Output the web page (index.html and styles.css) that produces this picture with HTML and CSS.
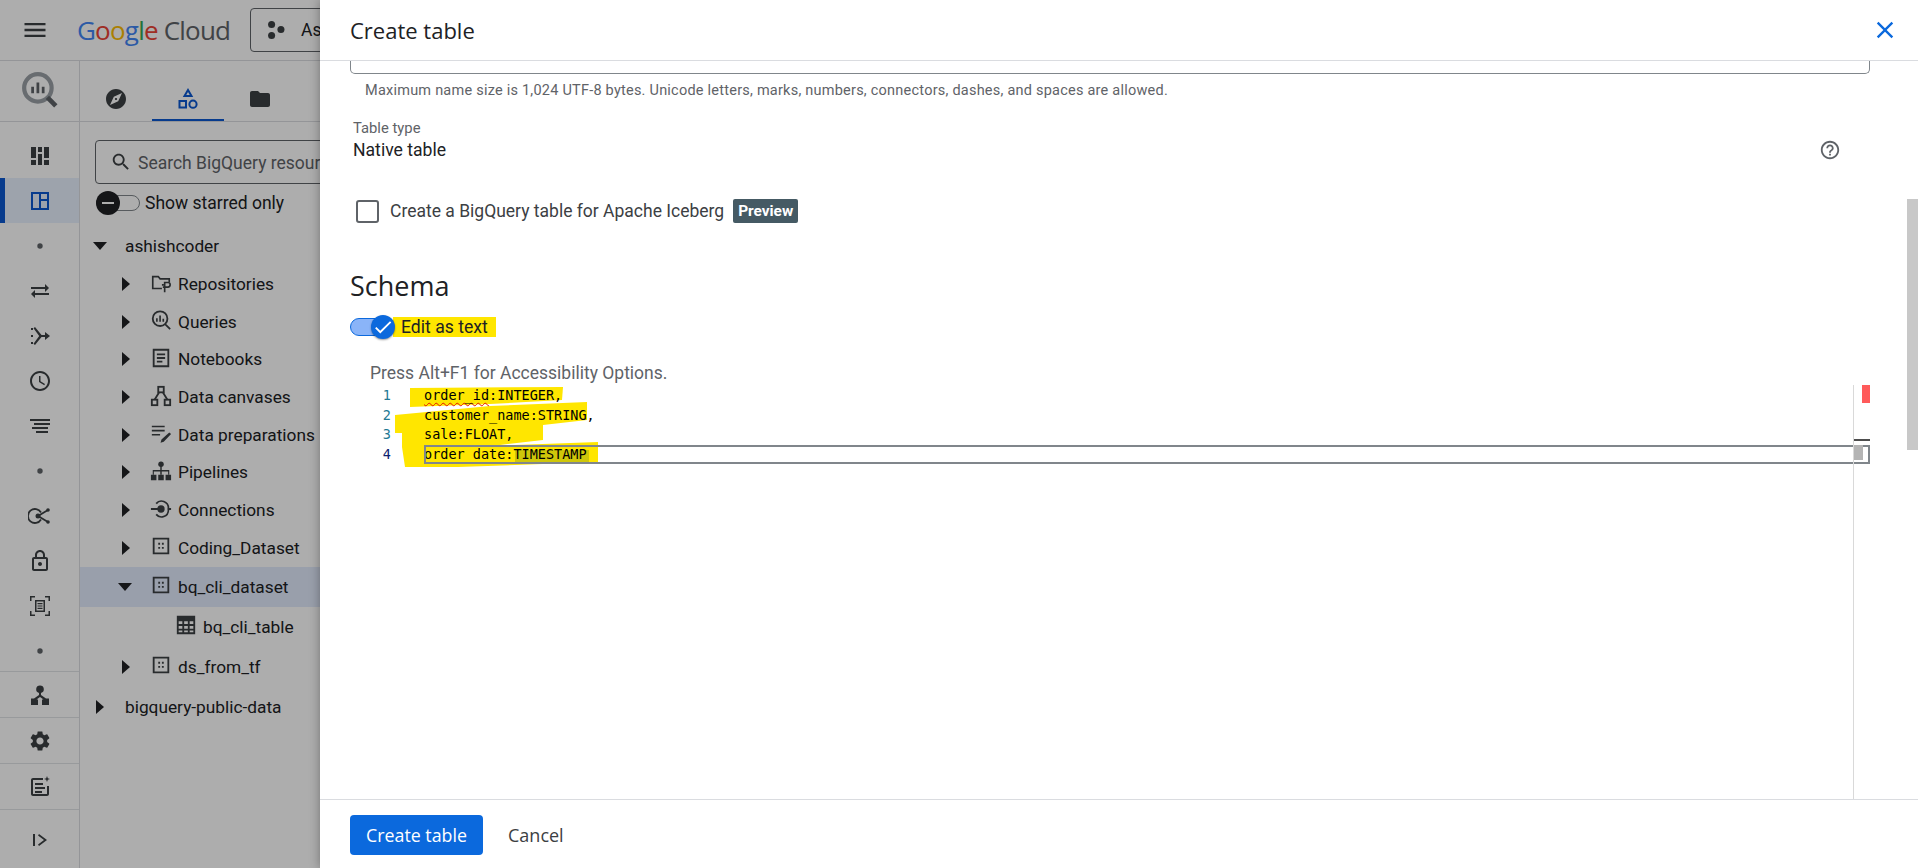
FILE: index.html
```html
<!DOCTYPE html>
<html lang="en">
<head>
<meta charset="utf-8">
<title>Create table</title>
<link rel="stylesheet" href="styles.css">
</head>
<body>
<svg class="defs" width="0" height="0" aria-hidden="true">
  <symbol id="i-arrow-r" viewBox="0 0 16 16"><path d="M4 1l8 7-8 7z"/></symbol>
  <symbol id="i-arrow-d" viewBox="0 0 16 16"><path d="M1 4h14l-7 8z"/></symbol>
  <symbol id="i-dataset" viewBox="0 0 24 24"><path fill-rule="evenodd" d="M3 3h18v18H3zM5 5v14h14V5zM9 8.500h2v2H9zM13 8.500h2v2h-2zM9 13h2v2H9zM13 13h2v2h-2z"/></symbol>
  <symbol id="i-dot" viewBox="0 0 24 24"><circle cx="12" cy="12" r="2.700"/></symbol>
</svg>

<div class="app">
  <header class="topbar">
    <button class="menu"><svg class="ic24" viewBox="0 0 24 24"><path d="M3 18h18v-2H3v2zm0-5h18v-2H3v2zm0-7v2h18V6H3z"/></svg></button>
    <div class="logo"><span class="g-b">G</span><span class="g-r">o</span><span class="g-y">o</span><span class="g-b">g</span><span class="g-g">l</span><span class="g-r">e</span><span class="logo-cloud">Cloud</span></div>
    <div class="project">
      <svg class="ic20" viewBox="0 0 20 20"><circle cx="6" cy="5" r="3.200"/><circle cx="14.500" cy="9.500" r="3.200"/><circle cx="6" cy="15" r="3.200"/></svg>
      <span>As</span>
    </div>
  </header>
  <div class="main">
    <nav class="rail">
      <div class="rail-logo">
        <svg class="bq" viewBox="0 0 36 36"><circle cx="16" cy="16" r="13" fill="none" stroke="#9aa0a6" stroke-width="4"/><path d="M25 25l8 8" stroke="#5f6368" stroke-width="4.500" fill="none"/><path d="M11 15v6M16 11v10M21 15v6" stroke="#5f6368" stroke-width="2.600" fill="none"/></svg>
      </div>
      <div class="rail-group">
        <a class="rail-item"><svg class="ic22" viewBox="0 0 24 24"><path d="M3 3h5v11H3zM3 16h5v5H3zM10 3h4v5h-4zM10 10h4v11h-4zM16 3h5v11h-5zM16 16h5v5h-5z"/></svg></a>
        <a class="rail-item active"><svg class="ic22" viewBox="0 0 24 24"><path fill-rule="evenodd" d="M3 3h18v18H3zM5 5v14h6V5zM13 5v5h6V5zM13 12v7h6v-7z"/></svg></a>
        <a class="rail-item"><svg class="ic22 small" viewBox="0 0 24 24"><use href="#i-dot"/></svg></a>
        <a class="rail-item"><svg class="ic22" viewBox="0 0 24 24"><path d="M6.990 11L3 15l3.990 4v-3H21v-2H6.990v-3zM21 9l-4-4v3H3v2h14v3l4-4z"/></svg></a>
        <a class="rail-item"><svg class="ic22" viewBox="0 0 24 24"><path d="M3 4h2v2H3zM3 11h2v2H3zM3 18h2v2H3zM7 3l6.500 8H17V8l5 4-5 4v-3h-3.500L7 21l-1.500-1.200 5.700-7.800-5.700-7.800z"/></svg></a>
        <a class="rail-item"><svg class="ic22" viewBox="0 0 24 24"><path d="M11.990 2C6.470 2 2 6.480 2 12s4.470 10 9.990 10C17.520 22 22 17.520 22 12S17.520 2 11.990 2zM12 20c-4.420 0-8-3.580-8-8s3.580-8 8-8 8 3.580 8 8-3.580 8-8 8zm.5-13H11v6l5.250 3.150.75-1.230-4.500-2.670z"/></svg></a>
        <a class="rail-item"><svg class="ic22" viewBox="0 0 24 24"><path d="M2 5h20v2H2zM6 9h16v2H6zM4 13h16v2H4zM8 17h12v2H8z"/></svg></a>
        <a class="rail-item"><svg class="ic22 small" viewBox="0 0 24 24"><use href="#i-dot"/></svg></a>
        <a class="rail-item"><svg class="ic22" viewBox="0 0 24 24"><path fill="none" stroke="currentColor" stroke-width="1.800" d="M13 8.500A7 7 0 1 0 13 15.500M10 12l10-6M10 12l10 6"/><circle cx="10" cy="12" r="2.500"/><circle cx="20" cy="6" r="1.800"/><circle cx="20" cy="18" r="1.800"/></svg></a>
        <a class="rail-item"><svg class="ic22" viewBox="0 0 24 24"><path d="M18 8h-1V6c0-2.760-2.240-5-5-5S7 3.240 7 6v2H6c-1.100 0-2 .9-2 2v10c0 1.100.9 2 2 2h12c1.100 0 2-.9 2-2V10c0-1.100-.9-2-2-2zM9 6c0-1.660 1.340-3 3-3s3 1.340 3 3v2H9V6zm9 14H6V10h12v10zm-6-3c1.100 0 2-.9 2-2s-.9-2-2-2-2 .9-2 2 .9 2 2 2z"/></svg></a>
        <a class="rail-item"><svg class="ic22" viewBox="0 0 24 24"><path d="M2 2h5v1.500H3.500V7H2zM17 2h5v5h-1.500V3.500H17zM2 17h1.500v3.500H7V22H2zM20.500 17H22v5h-5v-1.500h3.500zM7 6h10v12H7zM8.500 7.500v9h7v-9zM9.500 9h5v1.200h-5zM9.500 11.400h5v1.200h-5zM9.500 13.800h5V15h-5z" fill-rule="evenodd"/></svg></a>
        <a class="rail-item"><svg class="ic22 small" viewBox="0 0 24 24"><use href="#i-dot"/></svg></a>
      </div>
      <div class="rail-sec"><svg class="ic22" viewBox="0 0 24 24"><path d="M12 2.500a3.800 3.800 0 0 1 1 7.470V12l5 3.500H21V22h-7v-5.500h1.500L12 14l-3.500 2.500H10V22H3v-6.500h3l5-3.500V9.970A3.800 3.800 0 0 1 12 2.500z"/></svg></div>
      <div class="rail-sec"><svg class="ic22" viewBox="0 0 24 24"><path d="M19.140 12.940c.04-.3.06-.61.06-.94 0-.32-.02-.64-.07-.94l2.030-1.580c.18-.14.23-.41.120-.61l-1.920-3.320c-.12-.22-.37-.29-.59-.22l-2.390.96c-.5-.38-1.030-.7-1.620-.94l-.36-2.540c-.04-.24-.24-.41-.48-.41h-3.840c-.24 0-.43.17-.47.41l-.36 2.540c-.59.24-1.130.57-1.620.94l-2.390-.96c-.22-.08-.47 0-.59.22L2.740 8.870c-.12.21-.08.47.12.61l2.030 1.580c-.05.3-.09.63-.09.94s.02.64.07.94l-2.030 1.580c-.18.14-.23.41-.12.61l1.920 3.320c.12.22.37.29.59.22l2.390-.96c.5.38 1.030.7 1.620.94l.36 2.540c.05.24.24.41.48.41h3.840c.24 0 .44-.17.47-.41l.36-2.540c.59-.24 1.130-.56 1.620-.94l2.390.96c.22.08.47 0 .59-.22l1.920-3.320c.12-.22.07-.47-.12-.61l-2.010-1.580zM12 15.600c-1.980 0-3.600-1.620-3.600-3.600s1.620-3.600 3.600-3.600 3.600 1.620 3.600 3.600-1.620 3.600-3.600 3.600z"/></svg></div>
      <div class="rail-sec"><svg class="ic22" viewBox="0 0 24 24"><path d="M15 3v2H5v14h14v-8h2v8c0 1.100-.9 2-2 2H5c-1.100 0-2-.9-2-2V5c0-1.100.9-2 2-2zM7 8h8v2H7zM7 12h10v2H7zM7 16h7v2H7zM19 1l.8 2.200L22 4l-2.200.8L19 7l-.8-2.200L16 4l2.200-.8z"/></svg></div>
      <div class="rail-foot"><svg class="ic22" viewBox="0 0 24 24"><path d="M5 6h2v12H5zM11 6l8 6-8 6-1-1.400 6-4.600-6-4.600z"/></svg></div>
    </nav>
    <section class="explorer">
      <div class="tabs">
        <a class="tab"><svg class="ic22" viewBox="0 0 24 24"><path d="M12 10.900c-.61 0-1.100.49-1.100 1.100s.49 1.100 1.100 1.100c.61 0 1.100-.49 1.100-1.100s-.49-1.100-1.100-1.100zM12 2C6.480 2 2 6.480 2 12s4.480 10 10 10 10-4.480 10-10S17.520 2 12 2zm2.190 12.190L6 18l3.810-8.190L18 6l-3.810 8.190z"/></svg></a>
        <a class="tab on"><svg class="ic22" viewBox="0 0 24 24" fill="none" stroke="currentColor" stroke-width="2"><path d="M12 3l3.500 6h-7z"/><rect x="3.500" y="14" width="6.500" height="6.500"/><circle cx="17" cy="17.200" r="3.600"/></svg></a>
        <a class="tab"><svg class="ic22" viewBox="0 0 24 24"><path d="M10 4H4c-1.100 0-1.990.9-1.990 2L2 18c0 1.100.9 2 2 2h16c1.100 0 2-.9 2-2V8c0-1.100-.9-2-2-2h-8l-2-2z"/></svg></a>
      </div>
      <div class="search">
        <svg class="ic20" viewBox="0 0 24 24"><path d="M15.500 14h-.79l-.28-.27C15.410 12.590 16 11.110 16 9.500 16 5.910 13.090 3 9.500 3S3 5.910 3 9.500 5.910 16 9.500 16c1.610 0 3.090-.59 4.230-1.570l.27.28v.79l5 4.990L20.490 19l-4.990-5zm-6 0C7.010 14 5 11.990 5 9.500S7.010 5 9.500 5 14 7.010 14 9.500 11.990 14 9.500 14z"/></svg>
        <span>Search BigQuery resources</span>
      </div>
      <div class="starred">
        <span class="sw"><span class="sw-thumb"></span></span>
        <span>Show starred only</span>
      </div>
      <ul class="tree">
        <li class="row l0"><svg class="arr" viewBox="0 0 16 16"><use href="#i-arrow-d"/></svg><span>ashishcoder</span></li>
        <li class="row l1"><svg class="arr" viewBox="0 0 16 16"><use href="#i-arrow-r"/></svg><svg class="ti" viewBox="0 0 24 24" fill="none" stroke="currentColor" stroke-width="1.800"><path d="M13 18H3V5h6l2 2.500h10V11"/><path d="M16 22V11.500h3.500a2.500 2.500 0 0 1 0 5H14M13 14h2"/></svg><span>Repositories</span></li>
        <li class="row l1"><svg class="arr" viewBox="0 0 16 16"><use href="#i-arrow-r"/></svg><svg class="ti" viewBox="0 0 24 24"><path fill="none" stroke="currentColor" stroke-width="2" d="M11 2.500a8 8 0 1 0 0 16 8 8 0 0 0 0-16zM17 17l5 5"/><path fill="none" stroke="currentColor" stroke-width="1.800" d="M7.500 10v4M11 7v7M14.500 10.500V14"/></svg><span>Queries</span></li>
        <li class="row l1"><svg class="arr" viewBox="0 0 16 16"><use href="#i-arrow-r"/></svg><svg class="ti" viewBox="0 0 24 24"><path fill-rule="evenodd" d="M3 2h18v20H3zM5 4v16h14V4zM7.500 7h9v2h-9zM7.500 11h9v2h-9zM7.500 15h6v2h-6z"/></svg><span>Notebooks</span></li>
        <li class="row l1"><svg class="arr" viewBox="0 0 16 16"><use href="#i-arrow-r"/></svg><svg class="ti" viewBox="0 0 24 24" fill="none" stroke="currentColor" stroke-width="2"><rect x="9" y="2" width="6" height="6"/><rect x="2" y="16" width="6" height="6"/><rect x="16" y="16" width="6" height="6"/><path d="M10 8l-5 8M14 8l5 8"/></svg><span>Data canvases</span></li>
        <li class="row l1"><svg class="arr" viewBox="0 0 16 16"><use href="#i-arrow-r"/></svg><svg class="ti" viewBox="0 0 24 24"><path d="M2 4h14v1.800H2zM2 8.500h14v1.800H2zM2 13h9v1.800H2zM21 11.500l2 1.500-8 8.500-3.500 1 1-3.500z"/></svg><span>Data preparations</span></li>
        <li class="row l1"><svg class="arr" viewBox="0 0 16 16"><use href="#i-arrow-r"/></svg><svg class="ti" viewBox="0 0 24 24"><circle cx="12" cy="4.500" r="3"/><path d="M11.200 6h1.600v5H21v5h-1.200v-3.400h-7V16h-1.600v-3.400h-7V16H3v-5h8.200z"/><path d="M1 16h6v6H1zM9 16h6v6H9zM17 16h6v6h-6z"/></svg><span>Pipelines</span></li>
        <li class="row l1"><svg class="arr" viewBox="0 0 16 16"><use href="#i-arrow-r"/></svg><svg class="ti" viewBox="0 0 24 24"><circle cx="12" cy="12" r="4"/><path d="M1 11h11v2H1zM6 5.500a8.500 8.500 0 0 1 15 5.500h2v2h-2a8.500 8.500 0 0 1-15 5.500l1.500-1.300a6.500 6.500 0 0 0 11.500-5.200 6.500 6.500 0 0 0-11.500-5.200z"/></svg><span>Connections</span></li>
        <li class="row l1"><svg class="arr" viewBox="0 0 16 16"><use href="#i-arrow-r"/></svg><svg class="ti" viewBox="0 0 24 24"><use href="#i-dataset"/></svg><span>Coding_Dataset</span></li>
        <li class="row l1 lg selected"><svg class="arr" viewBox="0 0 16 16"><use href="#i-arrow-d"/></svg><svg class="ti" viewBox="0 0 24 24"><use href="#i-dataset"/></svg><span>bq_cli_dataset</span></li>
        <li class="row l2 lg"><svg class="ti" viewBox="0 0 24 24"><path fill-rule="evenodd" d="M2 2h20v20H2zM4 8v3h4V8zM10 8v3h4V8zM16 8v3h4V8zM4 13v3h4v-3zM10 13v3h4v-3zM16 13v3h4v-3zM4 18v2h4v-2zM10 18v2h4v-2zM16 18v2h4v-2z"/></svg><span>bq_cli_table</span></li>
        <li class="row l1 lg"><svg class="arr" viewBox="0 0 16 16"><use href="#i-arrow-r"/></svg><svg class="ti" viewBox="0 0 24 24"><use href="#i-dataset"/></svg><span>ds_from_tf</span></li>
        <li class="row l0 lg"><svg class="arr" viewBox="0 0 16 16"><use href="#i-arrow-r"/></svg><span>bigquery-public-data</span></li>
      </ul>
    </section>
  </div>
</div>

<div class="scrim"></div>

<aside class="panel">
  <header class="panel-head">
    <h1>Create table</h1>
    <button class="close"><svg viewBox="0 0 24 24"><path d="M19 6.410L17.590 5 12 10.590 6.410 5 5 6.410 10.590 12 5 17.590 6.410 19 12 13.410 17.590 19 19 17.590 13.410 12z"/></svg></button>
  </header>
  <div class="panel-body">
    <div class="input-tail"></div>
    <p class="hint">Maximum name size is 1,024 UTF-8 bytes. Unicode letters, marks, numbers, connectors, dashes, and spaces are allowed.</p>
    <div class="type-label">Table type</div>
    <div class="type-row">
      <span>Native table</span>
      <svg class="help" viewBox="0 0 24 24"><path d="M11 18h2v-2h-2v2zm1-16C6.480 2 2 6.480 2 12s4.480 10 10 10 10-4.480 10-10S17.520 2 12 2zm0 18c-4.410 0-8-3.590-8-8s3.590-8 8-8 8 3.590 8 8-3.590 8-8 8zm0-14c-2.210 0-4 1.790-4 4h2c0-1.100.9-2 2-2s2 .9 2 2c0 2-3 1.750-3 5h2c0-2.250 3-2.500 3-5 0-2.210-1.790-4-4-4z"/></svg>
    </div>
    <div class="check-row">
      <span class="checkbox"></span>
      <span>Create a BigQuery table for Apache Iceberg</span>
      <span class="badge">Preview</span>
    </div>
    <h2>Schema</h2>
    <div class="toggle-row">
      <span class="toggle"><span class="toggle-thumb"><svg viewBox="0 0 24 24"><path d="M9 16.200L4.800 12l-1.400 1.400L9 19 21 7l-1.400-1.400z"/></svg></span></span>
      <span class="marked">Edit as text</span>
    </div>
    <p class="a11y">Press Alt+F1 for Accessibility Options.</p>
    <div class="editor">
      <svg class="marker" viewBox="0 0 1520 414" width="1520" height="414">
        <path d="M60 3 L213 2 L212 15 L140 19 L60 22 Z"/>
        <path d="M45 30 L140 21 L237 17 L237 35 L193 40 L193 55 L150 60 L165 60 L248 57 L248 77 L108 82 L55 82 L52 62 L52 48 L45 48 Z"/>
        <rect class="sel" x="165" y="65" width="74" height="12"/>
      </svg>
      <div class="line"><span class="num">1</span><span class="code"><span class="squig">order_id</span>:INTEGER,</span></div>
      <div class="line"><span class="num">2</span><span class="code">customer_name:STRING,</span></div>
      <div class="line"><span class="num">3</span><span class="code">sale:FLOAT,</span></div>
      <div class="line cur"><span class="num">4</span><span class="code">order_date:TIMESTAMP</span></div>
      <div class="ruler">
        <span class="r-err"></span>
        <span class="r-cur"></span>
        <span class="r-thumb"></span>
      </div>
    </div>
    <div class="scrollbar"></div>
  </div>
  <footer class="panel-foot">
    <button class="primary">Create table</button>
    <button class="ghost">Cancel</button>
  </footer>
</aside>
</body>
</html>
```

FILE: styles.css
```css
* { box-sizing: border-box; }
html, body { margin: 0; height: 100%; }
body {
  width: 1918px;
  height: 868px;
  overflow: hidden;
  position: relative;
  background: #fff;
  color: #202124;
  font-family: Roboto, "Liberation Sans", sans-serif;
  font-size: 17.5px;
}
button { font: inherit; background: none; border: 0; padding: 0; }
h1, h2, p, ul { margin: 0; padding: 0; font-weight: 400; }
ul { list-style: none; }
.defs { position: absolute; }
svg { display: block; flex: none; }
svg:not([fill]) { fill: currentColor; }
.ic24 { width: 28px; height: 28px; }
.ic22 { width: 24px; height: 24px; }
.ic20 { width: 22px; height: 22px; }

/* background app */
.app { display: flex; flex-direction: column; height: 868px; }
.topbar {
  height: 61px;
  flex: none;
  display: flex;
  align-items: center;
  border-bottom: 1px solid #dadce0;
  color: #3c4043;
}
.menu { margin-left: 21px; color: #3c4043; }
.logo {
  margin-left: 28px;
  font-family: "Open Sans", Roboto, sans-serif;
  font-size: 26px;
  letter-spacing: -0.8px;
  line-height: 30px;
  width: 145px;
  white-space: nowrap;
}
.g-b { color: #4285f4; } .g-r { color: #ea4335; } .g-y { color: #fbbc04; } .g-g { color: #34a853; }
.logo-cloud { color: #5f6368; margin-left: 6px; }
.project {
  margin-left: 28px;
  height: 44px;
  padding: 0 14px;
  width: 200px;
  display: flex;
  align-items: center;
  gap: 14px;
  border: 1px solid #5f6368;
  border-radius: 4px;
  color: #202124;
}
.project svg { color: #3c4043; }
.main { flex: 1; display: flex; min-height: 0; }
.rail {
  width: 80px;
  flex: none;
  display: flex;
  flex-direction: column;
  border-right: 1px solid #dadce0;
  color: #3c4043;
}
.rail-logo {
  height: 61px;
  flex: none;
  display: flex;
  align-items: center;
  justify-content: center;
  border-bottom: 1px solid #dadce0;
  padding-bottom: 3px;
}
.bq { width: 38px; height: 38px; }
.rail-group { padding-top: 11px; height: 549px; flex: none; }
.rail-item {
  height: 45px;
  display: flex;
  align-items: center;
  justify-content: center;
  color: #3c4043;
}
.rail-item .small { color: #5f6368; }
.rail-item.active {
  background: #e8f0fe;
  color: #0b57d0;
  box-shadow: inset 5px 0 0 #0b57d0;
}
.rail-sec {
  height: 46px;
  flex: none;
  display: flex;
  align-items: center;
  justify-content: center;
  border-top: 1px solid #e1e3e6;
}
.rail-foot {
  flex: 1;
  padding-top: 2px;
  display: flex;
  align-items: center;
  justify-content: center;
  border-top: 1px solid #e1e3e6;
}
.explorer {
  width: 240px;
  flex: none;
  overflow: hidden;
  display: flex;
  flex-direction: column;
}
.tabs {
  height: 61px;
  flex: none;
  display: flex;
  border-bottom: 1px solid #dadce0;
  color: #3c4043;
}
.tab {
  width: 72px;
  height: 60px;
  padding-top: 16px;
  display: flex;
  align-items: center;
  justify-content: center;
}
.tab.on { color: #0b57d0; box-shadow: inset 0 -2px 0 #0b57d0; }
.search {
  margin: 18px 0 0 15px;
  height: 44px;
  width: 400px;
  flex: none;
  display: flex;
  align-items: center;
  gap: 6px;
  padding-left: 14px;
  border: 1px solid #5f6368;
  border-radius: 4px;
  color: #5f6368;
  white-space: nowrap;
}
.search span { padding-top: 1px; }
.search svg { color: #3c4043; }
.starred {
  display: flex;
  align-items: center;
  margin: 7px 0 0 15px;
  height: 24px;
  gap: 5px;
  flex: none;
  color: #202124;
  white-space: nowrap;
}
.sw {
  width: 44px;
  height: 16px;
  flex: none;
  margin-left: 1px;
  position: relative;
  background: #fff;
  border: 1px solid #80868b;
  border-radius: 8px;
}
.sw-thumb {
  position: absolute;
  left: -1px;
  top: -5px;
  width: 24px;
  height: 24px;
  border-radius: 50%;
  background: #202124;
}
.sw-thumb::after {
  content: "";
  position: absolute;
  left: 6px;
  top: 11px;
  width: 12px;
  height: 2px;
  background: #fff;
}
.tree { margin-top: 12.500px; flex: 1; }
.row {
  height: 37.700px;
  display: flex;
  align-items: center;
  white-space: nowrap;
  color: #202124;
  font-size: 17.300px;
}
.row.lg { height: 40px; }
.row.selected { background: #e2eafc; }
.arr { width: 16px; height: 16px; color: #202124; }
.ti { width: 22px; height: 22px; margin: 0 6px 3px 16px; color: #3c4043; }
.l0 { padding-left: 12px; }
.l0 .arr { margin-right: 17px; }
.l1 { padding-left: 38px; }
.l2 { padding-left: 79px; }
.selected .arr { margin-left: -1px; margin-right: 1px; }

.scrim {
  position: absolute;
  inset: 0;
  background: rgba(0, 0, 0, .32);
}

/* panel */
.panel {
  position: absolute;
  top: 0;
  right: 0;
  bottom: 0;
  width: 1598px;
  display: flex;
  flex-direction: column;
  background: #fff;
  box-shadow: 0 0 10px rgba(0, 0, 0, .35);
}
.panel-head {
  height: 61px;
  flex: none;
  display: flex;
  align-items: center;
  justify-content: space-between;
  padding: 0 19px 0 30px;
  border-bottom: 1px solid #dadce0;
}
h1 { font-family: "Open Sans", Roboto, sans-serif; font-size: 22px; color: #202124; }
.close { color: #0b69dd; width: 28px; height: 28px; }
.close svg { width: 28px; height: 28px; }
.panel-body {
  flex: 1;
  min-height: 0;
  position: relative;
  display: flex;
  flex-direction: column;
  padding: 0 48px 0 30px;
}
.input-tail {
  height: 13px;
  flex: none;
  border: 1px solid #80868b;
  border-top: 0;
  border-radius: 0 0 5px 5px;
}
.hint {
  margin-top: 8px;
  padding-left: 15px;
  line-height: 18px;
  font-size: 14.500px;
  letter-spacing: .23px;
  color: #5f6368;
}
.type-label {
  margin-top: 20px;
  padding-left: 3px;
  font-size: 14.800px;
  line-height: 16px;
  color: #5f6368;
}
.type-row {
  margin-top: 2px;
  padding: 0 29px 0 3px;
  height: 24px;
  display: flex;
  align-items: center;
  justify-content: space-between;
  font-size: 17.600px;
  color: #202124;
}
.help { width: 22px; height: 22px; color: #5f6368; }
.check-row {
  margin-top: 37px;
  height: 24px;
  display: flex;
  align-items: center;
  padding-left: 6px;
  color: #3c4043;
  font-size: 17.500px;
}
.checkbox {
  width: 23px;
  height: 23px;
  border: 2px solid #5f6368;
  border-radius: 3px;
  margin-right: 11px;
}
.badge {
  margin-left: 9px;
  width: 65px;
  height: 24px;
  border-radius: 2px;
  display: flex;
  align-items: center;
  justify-content: center;
  background: #455a64;
  color: #fff;
  font-size: 15.400px;
  font-weight: 700;
}
h2 {
  margin-top: 45px;
  font-family: "Open Sans", Roboto, sans-serif;
  font-size: 27px;
  line-height: 36px;
  color: #202124;
}
.toggle-row {
  margin-top: 11px;
  height: 24px;
  display: flex;
  align-items: center;
}
.toggle {
  width: 41px;
  height: 18px;
  border-radius: 9px;
  background: #8ab4f8;
  border: 1px solid #0b69dd;
  position: relative;
  flex: none;
}
.toggle-thumb {
  position: absolute;
  left: 20px;
  top: -4px;
  width: 24px;
  height: 24px;
  border-radius: 50%;
  background: #0b69dd;
  color: #fff;
  display: flex;
  align-items: center;
  justify-content: center;
  box-shadow: 0 1px 2px rgba(0, 0, 0, .4);
}
.toggle-thumb svg { width: 22px; height: 22px; }
.marked {
  margin-left: 2px;
  padding: 0 8px;
  line-height: 20px;
  background: #ffe600;
  color: #202124;
  font-size: 17.600px;
}
.a11y {
  margin-top: 24px;
  padding-left: 20px;
  line-height: 20px;
  color: #5f6368;
}
.editor {
  margin-top: 2px;
  flex: 1;
  min-height: 0;
  position: relative;
  padding-top: 1px;
  font-family: "DejaVu Sans Mono", "Liberation Mono", monospace;
  font-size: 13.500px;
  color: #000;
}
.marker { position: absolute; left: 0; top: 0; }
.marker path { fill: #ffe600; }
.marker .sel { fill: #cfc70a; }
.line {
  position: relative;
  height: 19.600px;
  line-height: 19.600px;
  display: flex;
}
.num { width: 41px; text-align: right; color: #237893; flex: none; }
.code { margin-left: 33px; flex: 1; white-space: pre; }
.cur .num { color: #0b216f; }
.cur .code { outline: 2px solid #80868b; outline-offset: -2px; }
.squig {
  text-decoration: underline wavy #e51400 1px;
  text-underline-offset: 2px;
}
.ruler {
  position: absolute;
  right: 0;
  top: 0;
  bottom: 0;
  width: 17px;
  border-left: 1px solid #d9d9d9;
}
.r-err { position: absolute; right: 0; top: 0; width: 8px; height: 18px; background: #ff5a5a; }
.r-cur { position: absolute; right: 0; left: 0; top: 54px; height: 2px; background: #4d4d4d; }
.r-thumb { position: absolute; left: 0; top: 60px; width: 9px; height: 15px; background: #b4b4b4; }
.scrollbar {
  position: absolute;
  right: 0;
  top: 138px;
  width: 11px;
  height: 251px;
  background: #c8c8c8;
}
.panel-foot {
  height: 69px;
  flex: none;
  display: flex;
  align-items: center;
  padding: 2px 0 0 30px;
  border-top: 1px solid #dadce0;
}
.primary {
  width: 133px;
  height: 40px;
  border-radius: 4px;
  background: #0b69dd;
  color: #fff;
  font-family: "Open Sans", Roboto, sans-serif;
  font-size: 17.800px;
  font-weight: 500;
}
.ghost {
  margin-left: 25px;
  font-family: "Open Sans", Roboto, sans-serif;
  font-size: 18px;
  font-weight: 500;
  color: #3c4043;
}
```
